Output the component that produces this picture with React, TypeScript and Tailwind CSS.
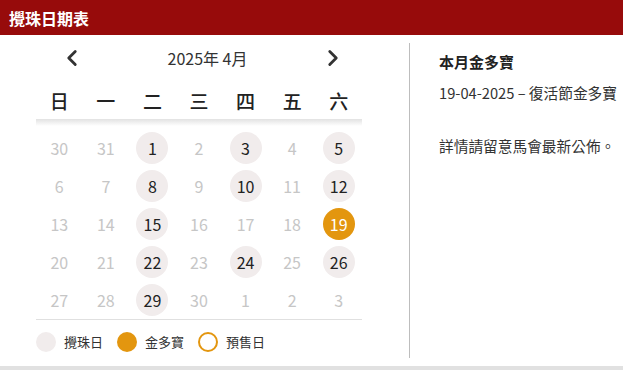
import { ChevronLeft, ChevronRight } from "lucide-react";

type Day = { n: number; muted?: boolean; draw?: boolean; jackpot?: boolean };

const weekdays = ["日", "一", "二", "三", "四", "五", "六"];

const drawDays = [1, 3, 5, 8, 10, 12, 15, 22, 24, 26, 29];

function buildDays(): Day[] {
  const days: Day[] = [{ n: 30, muted: true }, { n: 31, muted: true }];
  for (let i = 1; i <= 30; i++) {
    days.push({ n: i, draw: drawDays.includes(i), jackpot: i === 19 });
  }
  [1, 2, 3].forEach((n) => days.push({ n, muted: true }));
  return days;
}

function DayCell({ day }: { day: Day }) {
  let cls = "text-[#c6c6c6]";
  if (day.jackpot) cls = "bg-[#e3960f] text-white";
  else if (day.draw) cls = "bg-[#f1ecec] text-[#222]";
  return (
    <div className="flex h-[38px] items-center justify-center">
      <span className={`flex size-[32px] items-center justify-center rounded-full text-[16px] ${cls}`}>{day.n}</span>
    </div>
  );
}

export default function App() {
  const days = buildDays();

  return (
    <div
      className="flex h-[370px] w-[623px] flex-col overflow-hidden bg-white text-[#333]"
      style={{ fontFamily: '"Noto Sans CJK TC", "Noto Sans", sans-serif' }}
    >
      <div className="flex h-[35px] shrink-0 items-center bg-[#970b0b] pl-[9px]">
        <h1 className="text-[16px] font-bold text-white">攪珠日期表</h1>
      </div>

      <div className="flex flex-1">
        <div className="ml-[36px] w-[326px]">
          <div className="mt-[8px] flex h-[30px] items-center justify-between pl-[23px] pr-[16px]">
            <ChevronLeft className="size-[26px] text-[#333]" strokeWidth={2.6} />
            <span className="ml-[10px] text-[16px] text-[#333]">2025年 4月</span>
            <ChevronRight className="size-[26px] text-[#333]" strokeWidth={2.6} />
          </div>

          <div className="mt-[10px] grid h-[36px] grid-cols-7 items-center">
            {weekdays.map((w) => (
              <div key={w} className="text-center text-[19px] font-medium text-[#222]">
                {w}
              </div>
            ))}
          </div>
          <div className="h-[7px] bg-gradient-to-b from-[#e2e2e2] to-white" />

          <div className="mt-[3px] grid grid-cols-7">
            {days.map((d, i) => (
              <DayCell key={i} day={d} />
            ))}
          </div>

          <div className="flex h-[45px] items-center gap-[8px] border-t border-[#e0e0e0] text-[13px] text-[#333]">
            <span className="size-[20px] rounded-full bg-[#f1ecec]" />
            <span className="mr-[6px]">攪珠日</span>
            <span className="size-[20px] rounded-full bg-[#e3960f]" />
            <span className="mr-[6px]">金多寶</span>
            <span className="size-[20px] rounded-full border-2 border-[#e3960f]" />
            <span>預售日</span>
          </div>
        </div>

        <div className="ml-[47px] mt-[8px] mb-[8px] w-px bg-[#bdbdbd]" />

        <div className="ml-[29px] pt-[16px]">
          <h2 className="text-[15px] font-bold leading-[22px] text-[#222]">本月金多寶</h2>
          <p className="mt-[10px] text-[14.7px] leading-[20px]">19-04-2025 – 復活節金多寶</p>
          <p className="mt-[33px] text-[14.7px] leading-[20px]">詳情請留意馬會最新公佈。</p>
        </div>
      </div>

      <div className="h-[4px] shrink-0 bg-[#e1e1e1]" />
    </div>
  );
}
